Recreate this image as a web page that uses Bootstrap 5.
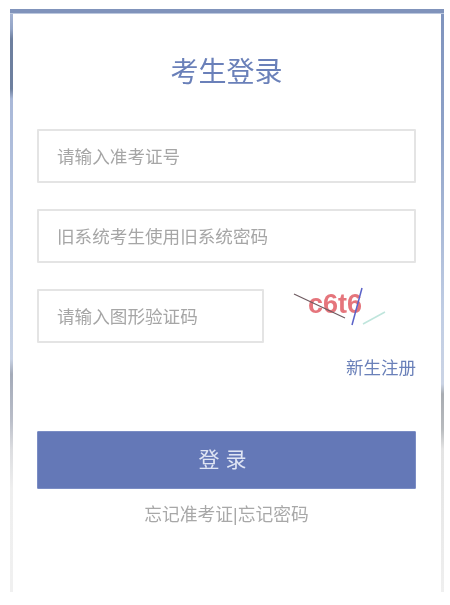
<!doctype html>
<html lang="zh-CN">
<head>
<meta charset="utf-8">
<link href="https://cdn.jsdelivr.net/npm/bootstrap@5.3.0/dist/css/bootstrap.min.css" rel="stylesheet">
<style>
html,body{height:605px;overflow:hidden;background:#fff;}
body{font-family:"Liberation Sans","Noto Sans CJK SC",sans-serif;padding:9px 6px 13px 10px;}
.login-frame{width:434px;height:583px;padding:5px 28px 0 27px;filter:blur(.4px);
  background:
    linear-gradient(#8093bb 0,#8093bb 4px,#bcc8de 4px,#bcc8de 5px) top/100% 5px no-repeat,
    linear-gradient(#a9b7d6 0,#93a4c6 20px,#6e809f 30px,#6e809f 80px,#a9b8d8 90px,#bccae2 250px,#c8d2e4 350px,#a4abb9 365px,#b9bdc8 410px,#dcdde0 440px,#efefef 480px,#f0f0f0 100%) left top/3px 100% no-repeat,
    linear-gradient(#7f93bd 0,#8ea2c8 120px,#c0cde4 300px,#cbd4e5 375px,#a8acb2 385px,#b8bbbe 420px,#e4e4e4 440px,#efefef 100%) right top/3px 100% no-repeat;}
.login-title{font-size:28px;font-weight:400;color:#6a80b9;line-height:40px;margin:39px 0 0;text-align:center;}
.exam-input.form-control{height:54px;border:2px solid #e4e4e4;border-radius:1px;padding:2px 18px 0;font-size:17.6px;color:#555;box-shadow:none;}
.exam-input.form-control::placeholder{color:#a6a6a6;opacity:1;}
.first-input{margin-top:36px;}
.next-input{margin-top:26px;}
.captcha-input{width:227px;flex:none;}
.captcha-pic{width:100px;height:46px;margin-left:28px;margin-top:-4px;}
.captcha-text{font-family:"Liberation Sans",sans-serif;font-size:27px;font-weight:700;fill:#e5757c;}
.reg-link{font-size:17.5px;color:#6a80b9;text-decoration:none;line-height:22px;}
.reg-row{margin-top:14px;line-height:22px;}
.login-btn.btn{height:58px;margin-top:51px;background:#6478b7;border:1px solid #7b8dc4;border-radius:1px;color:#dfe5f4;font-size:21px;letter-spacing:6px;padding:0 2px 0 0;}
.forgot{font-size:17.8px;color:#a8a8a8;line-height:22px;margin-top:15px;}
.forgot a{color:inherit;text-decoration:none;}
</style>
</head>
<body>
<div class="login-frame">
  <h1 class="login-title">考生登录</h1>
  <form>
    <input class="form-control exam-input first-input" type="text" placeholder="请输入准考证号">
    <input class="form-control exam-input next-input" type="password" placeholder="旧系统考生使用旧系统密码">
    <div class="d-flex align-items-start next-input">
      <input class="form-control exam-input captcha-input" type="text" placeholder="请输入图形验证码">
      <svg class="captcha-pic" viewBox="0 0 100 46" aria-label="验证码">
        <text class="captcha-text" x="16" y="28">c6t6</text>
        <line x1="2" y1="9" x2="53" y2="33" stroke="#6e5a60" stroke-width="1.3"/>
        <line x1="70" y1="3" x2="60" y2="40" stroke="#5a62c8" stroke-width="1.5"/>
        <line x1="71" y1="39" x2="93" y2="27" stroke="#bfe5dc" stroke-width="1.5"/>
      </svg>
    </div>
    <div class="text-end reg-row"><a class="reg-link" href="#">新生注册</a></div>
    <button class="btn login-btn w-100 d-block" type="button">登录</button>
    <div class="forgot text-center"><a href="#">忘记准考证</a>|<a href="#">忘记密码</a></div>
  </form>
</div>
</body>
</html>
